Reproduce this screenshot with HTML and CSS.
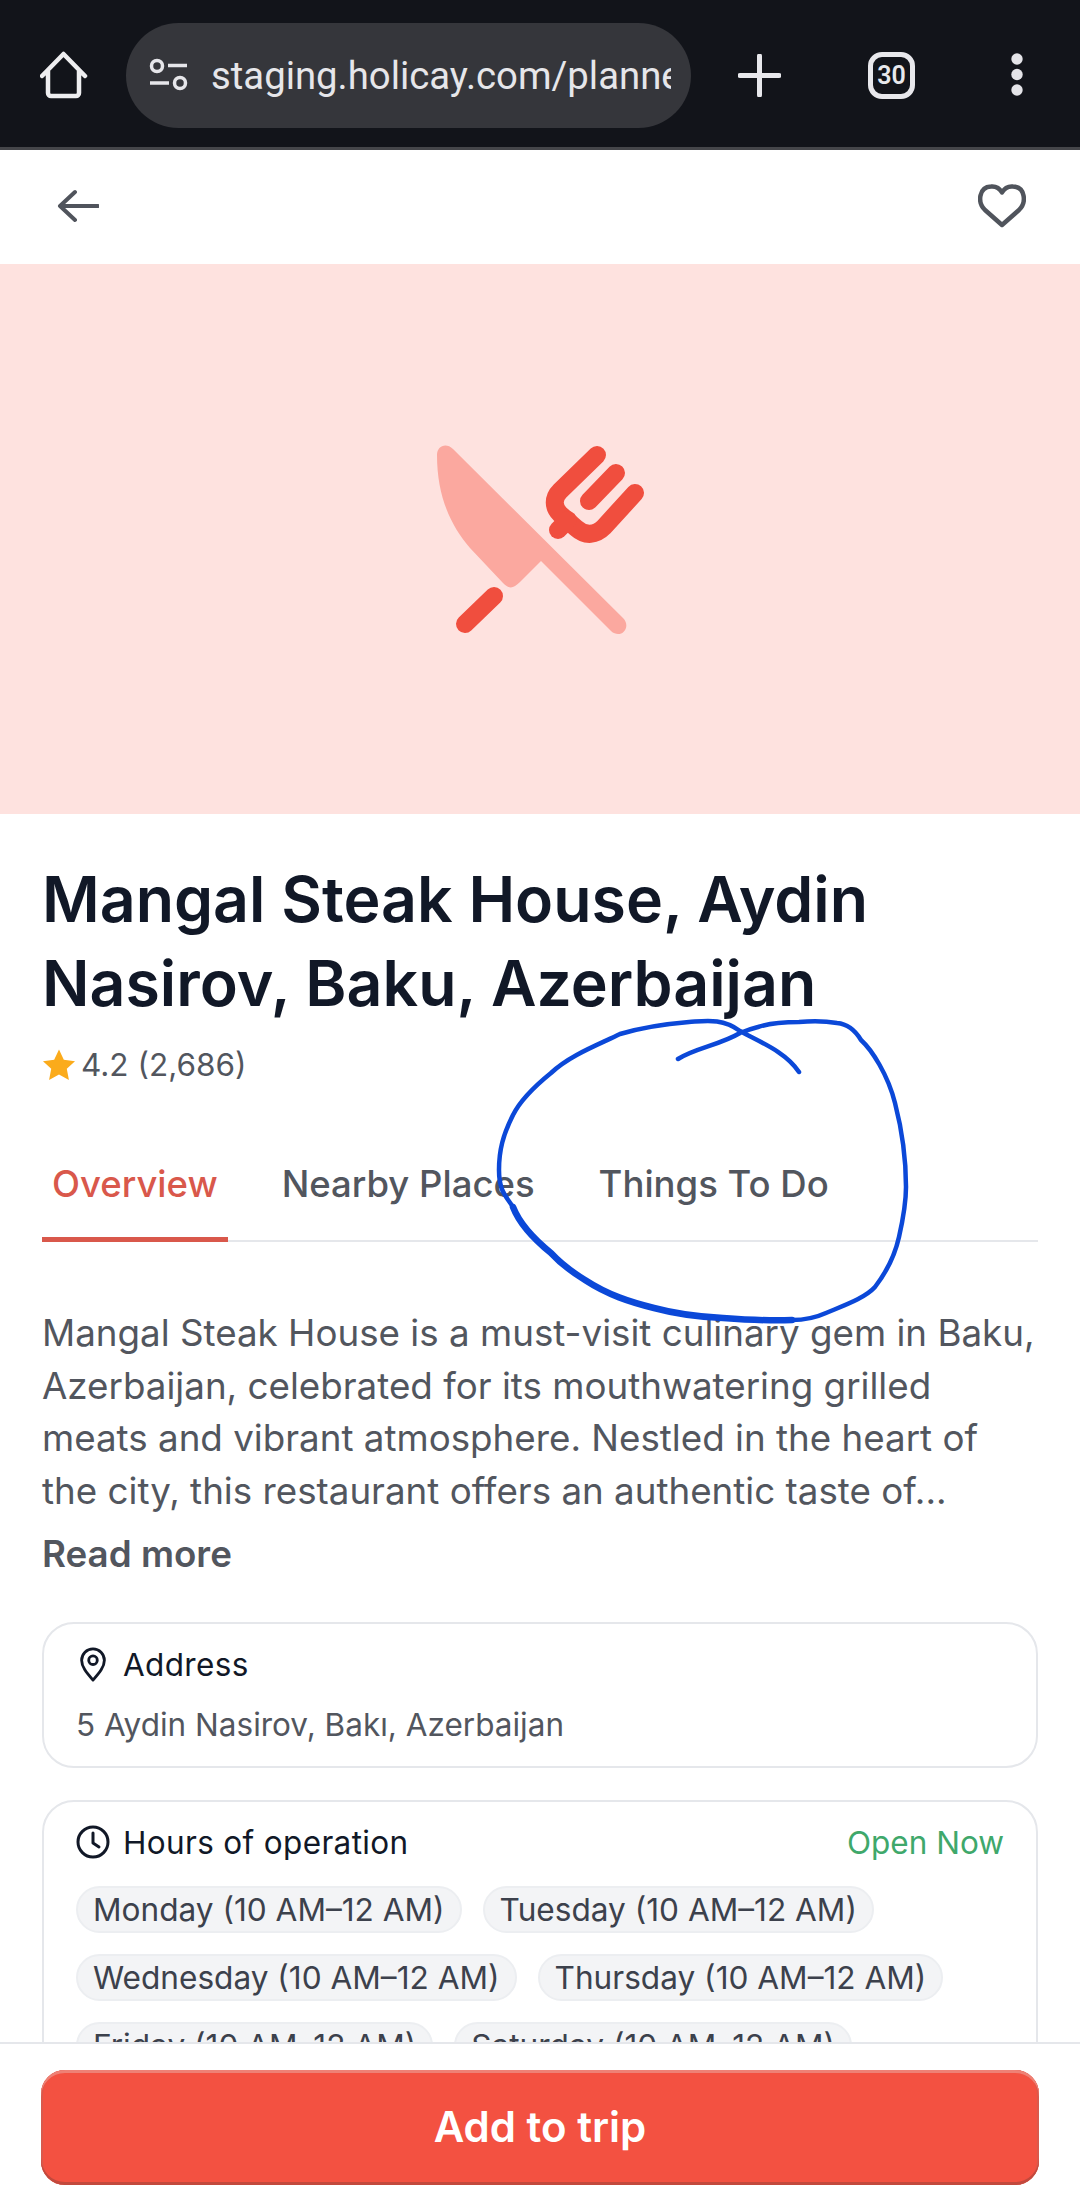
FILE: index.html
```html
<!DOCTYPE html>
<html lang="en">
<head>
<meta charset="utf-8">
<title>Mangal Steak House</title>
<link rel="stylesheet" href="styles.css">
</head>
<body>
<div class="screen">
  <header class="chrome">
    <svg class="home-icon" viewBox="0 0 48 48"><path d="M2 25 23.500 3 45 25M8 20V42a3 3 0 0 0 3 3H36a3 3 0 0 0 3-3V20" fill="none" stroke="#eeeef0" stroke-width="4.500" stroke-linejoin="round" stroke-linecap="round"/></svg>
    <div class="url-pill">
      <svg class="tune-icon" viewBox="0 0 40 34"><circle cx="8" cy="8" r="5.500" fill="none" stroke="#e6e6ea" stroke-width="3.500"/><path d="M19 7.500h19M1 25h19" stroke="#e6e6ea" stroke-width="3.500" fill="none"/><circle cx="31" cy="25" r="5.500" fill="none" stroke="#e6e6ea" stroke-width="3.500"/></svg>
      <span class="url-text">staging.holicay.com/planner/place</span>
    </div>
    <svg class="plus-icon" viewBox="0 0 43 43"><path d="M21.500 2v39M2 21.500h39" stroke="#e8e8ec" stroke-width="5" stroke-linecap="round"/></svg>
    <div class="tabs-count">30</div>
    <svg class="more-icon" viewBox="0 0 14 44"><circle cx="7" cy="6" r="5.700" fill="#e4e4e8"/><circle cx="7" cy="21.500" r="5.700" fill="#e4e4e8"/><circle cx="7" cy="37" r="5.700" fill="#e4e4e8"/></svg>
  </header>

  <nav class="topnav">
    <svg class="back-icon" viewBox="0 0 42 34"><path d="M18 3 3 17l15 14M3 17h38" fill="none" stroke="#50545c" stroke-width="4" stroke-linecap="round" stroke-linejoin="round"/></svg>
    <svg class="heart-icon" viewBox="0 0 48 44"><path d="M24 41 7 26C-1 18 1 3 13 2.500 18 2 22 5 24 8.500 26 5 30 2 35 2.500 47 3 49 18 41 26Z" fill="none" stroke="#50545c" stroke-width="4.500" stroke-linejoin="round"/></svg>
  </nav>

  <section class="hero">
    <svg class="food-icon" viewBox="420 419 240 240">
      <path fill="#fba89f" d="M437 455C437 446 446 442 453 449L623 618C632 627 621 640 611 631L541 561 520 582C513 589 509 589 503 583L470 548C450 525 437 495 437 455Z"/>
      <g fill="none" stroke="#f04e3e" stroke-width="18" stroke-linecap="round" stroke-linejoin="round">
        <path d="M597 455 560 491C553 498 553 507 560 514L576 528C586 537 596 535 604 527L635 493"/>
        <path d="M589 501 616 473"/>
        <path d="M558 530 568 520"/>
        <path d="M465 624 494 596"/>
      </g>
    </svg>
  </section>

  <main class="content">
    <h1 class="title">Mangal Steak House, Aydin Nasirov, Baku, Azerbaijan</h1>
    <div class="rating">
      <svg class="star" viewBox="0 0 24 24"><path fill="#fbab1b" d="M12 1l3.400 7.300 7.900 1-5.800 5.400 1.500 7.900L12 18.700l-7 3.900 1.500-7.900L.7 9.300l7.900-1Z"/></svg>
      <span>4.2 (2,686)</span>
    </div>
    <div class="tabs">
      <span class="tab tab-active">Overview</span>
      <span class="tab">Nearby Places</span>
      <span class="tab">Things To Do</span>
    </div>
    <p class="description">Mangal Steak House is a must-visit culinary gem in Baku, Azerbaijan, celebrated for its mouthwatering grilled meats and vibrant atmosphere. Nestled in the heart of the city, this restaurant offers an authentic taste of...</p>
    <div class="read-more">Read more</div>

    <section class="card">
      <div class="card-head">
        <div class="card-label">
          <svg class="card-icon" viewBox="0 0 30 38"><path d="M15 36C8 28 3 22 3 15a12 12 0 0 1 24 0c0 7-5 13-12 21Z" fill="none" stroke="#111827" stroke-width="3" stroke-linejoin="round"/><circle cx="15" cy="15" r="4.500" fill="none" stroke="#111827" stroke-width="3"/></svg>
          <span>Address</span>
        </div>
      </div>
      <div class="address">5 Aydin Nasirov, Bakı, Azerbaijan</div>
    </section>

    <section class="card">
      <div class="card-head">
        <div class="card-label">
          <svg class="card-icon" viewBox="0 0 34 34"><circle cx="17" cy="17" r="15" fill="none" stroke="#111827" stroke-width="3"/><path d="M17 8v10l6 4" fill="none" stroke="#111827" stroke-width="3" stroke-linecap="round" stroke-linejoin="round"/></svg>
          <span>Hours of operation</span>
        </div>
        <span class="open-now">Open Now</span>
      </div>
      <div class="chips">
        <span class="chip">Monday (10 AM–12 AM)</span>
        <span class="chip">Tuesday (10 AM–12 AM)</span>
        <span class="chip">Wednesday (10 AM–12 AM)</span>
        <span class="chip">Thursday (10 AM–12 AM)</span>
        <span class="chip">Friday (10 AM–12 AM)</span>
        <span class="chip">Saturday (10 AM–12 AM)</span>
      </div>
    </section>
  </main>

  <footer class="action-bar">
    <div class="add-button">Add to trip</div>
  </footer>

  <svg class="scribble" viewBox="0 0 1080 2212">
    <path class="ink" d="M799 1072C786 1052 760 1042 740 1031 722 1018 706 1021 689 1022 665 1024 640 1028 620 1034 600 1044 570 1055 551 1073 530 1090 518 1105 513 1115 503 1135 499 1150 499 1170 499 1190 505 1195 513 1207 520 1225 535 1240 551 1253 562 1265 572 1272 585 1280 608 1295 630 1302 654 1308 680 1315 700 1317 723 1318 750 1320 770 1321 792 1320 805 1320 815 1318 826 1313 845 1305 865 1298 875 1287 888 1270 895 1255 899 1237 904 1215 906 1200 906 1187 906 1160 902 1130 895 1103 888 1075 872 1050 861 1040 855 1030 848 1024 837 1023 825 1021 812 1021 799 1022 785 1022 770 1023 758 1027 750 1029 745 1031 740 1033 720 1045 695 1048 678 1059"/>
    <path class="ink-thick" d="M513 1207C520 1225 535 1240 551 1253 562 1265 572 1272 585 1280 608 1295 630 1302 654 1308 680 1315 700 1317 723 1318 750 1320 770 1321 792 1320"/>
  </svg>
</div>
</body>
</html>
```
FILE: styles.css
```css
* { box-sizing: border-box; }
html, body { margin: 0; padding: 0; background: #fff; }
body { font-family: Inter, "Liberation Sans", sans-serif; }
.screen { position: relative; width: 1080px; height: 2212px; overflow: hidden; background: #fff; }

.chrome { height: 150px; background: #12141a; border-bottom: 3px solid #45464a; display: flex; align-items: center; padding: 3px 0 0 40px; }
.home-icon { width: 48px; height: 48px; flex: none; }
.url-pill { width: 565px; height: 105px; margin-left: 38px; background: #35363b; border-radius: 53px; display: flex; align-items: center; padding: 0 20px 0 23px; flex: none; }
.tune-icon { width: 40px; height: 34px; flex: none; margin-right: 22px; }
.url-text { font-family: Roboto, sans-serif; font-size: 38.3px; color: #e6e6ea; white-space: nowrap; overflow: hidden; flex: 1; min-width: 0; }
.plus-icon { width: 43px; height: 43px; margin-left: 47px; flex: none; }
.tabs-count { width: 47px; height: 47px; margin-left: 87px; border: 5px solid #e8e8ec; border-radius: 14px; color: #e8e8ec; font: 600 25px/37px Roboto, sans-serif; text-align: center; flex: none; }
.more-icon { width: 14px; height: 44px; margin-left: 95px; flex: none; }

.topnav { height: 114px; display: flex; align-items: center; justify-content: space-between; padding: 0 54px 2px 57px; }
.back-icon { width: 42px; height: 34px; }
.heart-icon { width: 48px; height: 44px; }

.hero { height: 550px; background: #fee2df; display: flex; align-items: center; justify-content: center; }
.food-icon { width: 240px; height: 240px; }

.content { padding: 43px 42px 0; }
.title { margin: 0; font-size: 62.6px; line-height: 84px; font-weight: 600; color: #111827; }
.rating { display: flex; align-items: center; gap: 5px; margin-top: 14px; font-size: 31.5px; line-height: 52px; color: #52565e; }
.star { width: 34px; height: 34px; flex: none; }
.tabs { display: flex; margin-top: 56px; height: 95px; border-bottom: 2px solid #e5e7eb; }
.tab { height: 95px; padding: 0 10px; margin-right: 44px; font-size: 36.5px; line-height: 74px; font-weight: 500; color: #52565e; }
.tab-active { color: #d9584b; border-bottom: 5px solid #d9584b; }
.description { margin: 65px 0 0; font-size: 36.75px; line-height: 52.5px; color: #52565e; }
.read-more { margin-top: 11px; margin-bottom: 42px; font-size: 36.75px; line-height: 52px; font-weight: 600; color: #52565e; }

.card { border: 2px solid #e5e7eb; border-radius: 32px; padding: 18px 32px 20px; margin-top: 32px; background: #fff; }
.read-more + .card { margin-top: 0; }
.card-head { display: flex; align-items: center; justify-content: space-between; height: 44px; }
.card-label { display: flex; align-items: center; gap: 13px; font-size: 31.5px; font-weight: 400; letter-spacing: 0.35px; color: #111827; }
.card-icon { width: 34px; height: 36px; flex: none; }
.open-now { font-size: 31.5px; color: #3fa86b; }
.address { margin-top: 18px; font-size: 31.5px; line-height: 42px; color: #52565e; }
.chips { display: flex; flex-wrap: wrap; gap: 21px; margin-top: 22px; }
.chip { height: 47px; padding: 0 15px; border: 2px solid #eceef1; border-radius: 24px; background: #f3f4f6; font-size: 31.6px; line-height: 43px; color: #3c414c; white-space: nowrap; }

.action-bar { position: absolute; left: 0; right: 0; bottom: 0; height: 170px; background: #fff; border-top: 2px solid #e5e7eb; padding: 26px 41px 0; }
.add-button { height: 115px; background: #f35141; border-radius: 24px; box-shadow: inset 0 3px 0 #ee8175, inset 0 -3px 0 #c2493d, inset 2px 0 0 #d9594c, inset -2px 0 0 #d9594c; color: #fff; font-size: 42px; font-weight: 600; line-height: 113px; text-align: center; }

.scribble { position: absolute; left: 0; top: 0; width: 1080px; height: 2212px; pointer-events: none; }
.ink { fill: none; stroke: #0b48d8; stroke-width: 4.5; stroke-linecap: round; stroke-linejoin: round; }
.ink-thick { fill: none; stroke: #0b48d8; stroke-width: 6.5; stroke-linecap: round; }
```
